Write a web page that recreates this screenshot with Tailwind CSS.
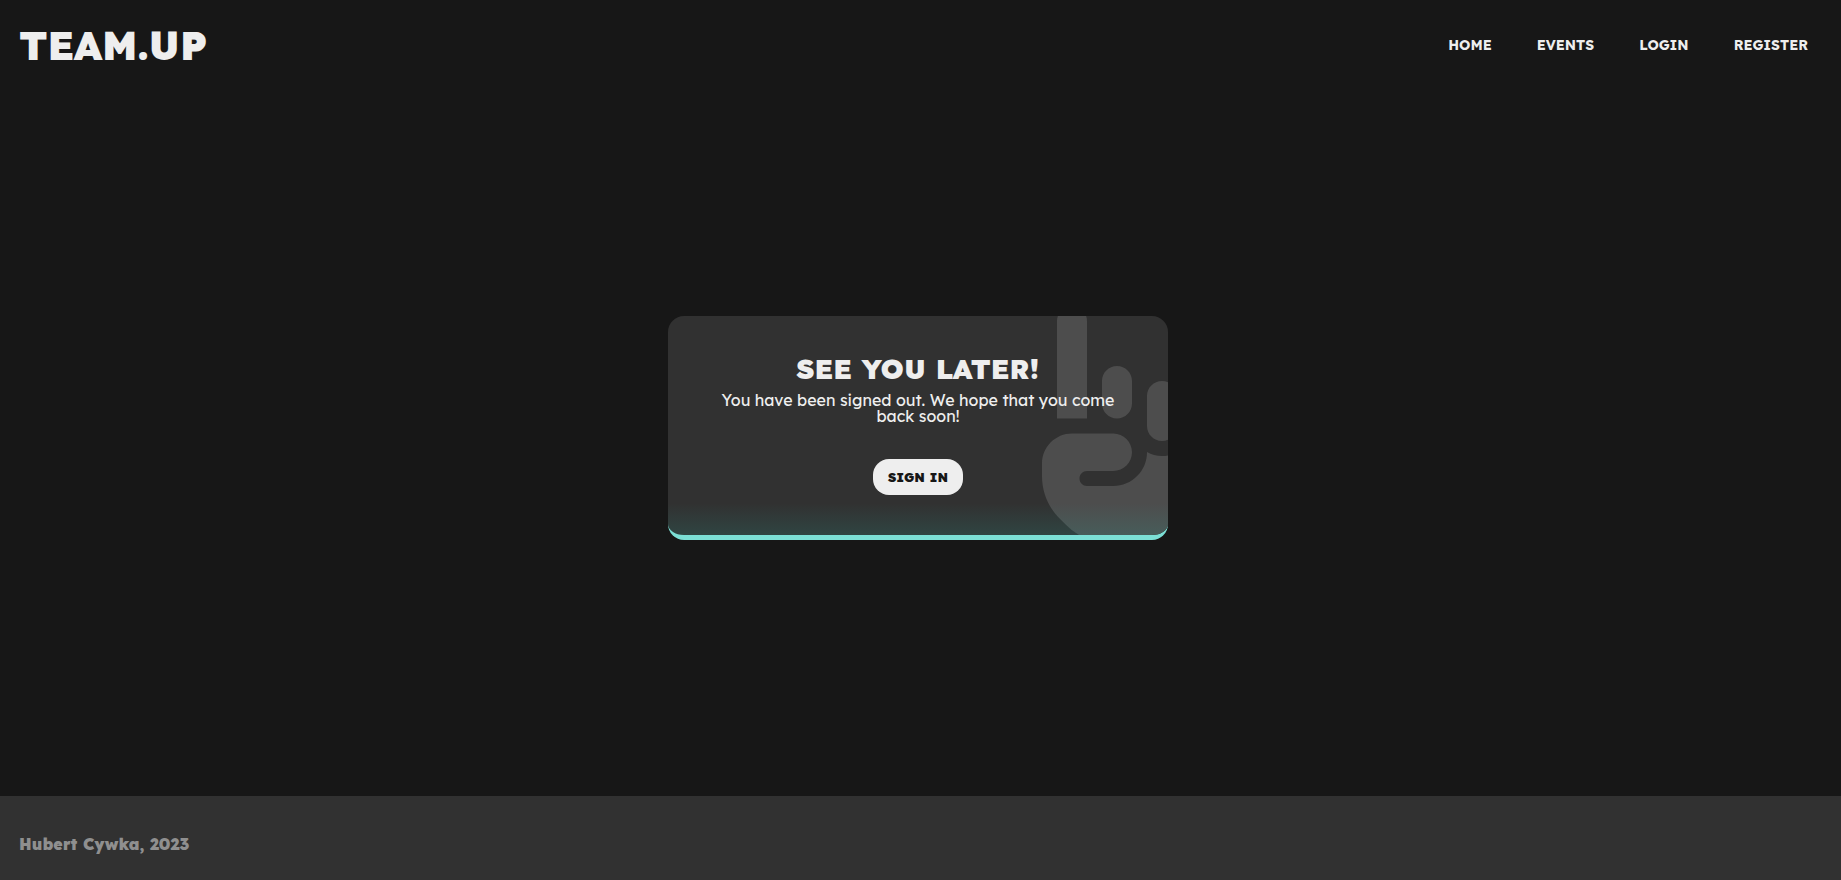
<!DOCTYPE html>
<html lang="en">
<head>
<meta charset="utf-8">
<meta name="viewport" content="width=device-width, initial-scale=1">
<title>Team.up</title>
<script src="https://cdn.jsdelivr.net/npm/@tailwindcss/browser@4"></script>
</head>
<body class="flex min-h-screen flex-col bg-[#171717] font-['Lexend','Inter',sans-serif] text-[#eeeeee]">
  <header class="flex h-[90px] items-center justify-between pl-[19px] pr-[33px]">
    <a href="#" class="text-[40px] leading-10 font-black">TEAM.UP</a>
    <nav class="flex items-center gap-[45px] text-sm font-bold">
      <a href="#">HOME</a>
      <a href="#">EVENTS</a>
      <a href="#">LOGIN</a>
      <a href="#">REGISTER</a>
    </nav>
  </header>

  <main class="flex grow items-center justify-center pr-[5px] pb-[30px]">
    <section class="relative flex w-full max-w-[500px] flex-col items-center overflow-hidden rounded-2xl border-b-[5px] border-[#7ce0d6] bg-[#313131] px-10 pt-[39px] pb-10 text-center">
      <svg class="absolute -top-[10px] -right-[54px] h-[240px] w-[180px] text-[#4d4d4d]" viewBox="0 0 384 512" fill="currentColor" aria-hidden="true"><path d="M32 32C32 14.3 46.3 0 64 0S96 14.3 96 32V240H32V32zM224 192c0-17.7 14.3-32 32-32s32 14.3 32 32v64c0 17.7-14.3 32-32 32s-32-14.3-32-32V192zm-64-64c17.7 0 32 14.3 32 32v48c0 17.7-14.3 32-32 32s-32-14.3-32-32V160c0-17.7 14.3-32 32-32zm160 96c0-17.7 14.3-32 32-32s32 14.3 32 32v64c0 17.7-14.3 32-32 32s-32-14.3-32-32V224zm-96 88l0-.6c9.4 5.4 20.3 8.6 32 8.6c13.2 0 25.4-4 35.6-10.8c8.7 24.9 32.5 42.8 60.4 42.8c11.7 0 22.6-3.1 32-8.6V352c0 88.4-71.6 160-160 160H162.3c-42.4 0-83.1-16.9-113.1-46.9L37.5 453.5C13.5 429.5 0 396.9 0 363V336c0-35.3 28.7-64 64-64h88c22.1 0 40 17.9 40 40s-17.9 40-40 40H96c-8.8 0-16 7.2-16 16s7.2 16 16 16h56c39.8 0 72-32.2 72-72z"/></svg>
      <div class="absolute inset-x-0 bottom-0 h-8 bg-linear-to-t from-[#28b4a5]/15 to-[#28b4a5]/0"></div>
      <h1 class="relative text-[28px] leading-7 font-black">SEE YOU LATER!</h1>
      <p class="relative mt-[9px] text-base leading-4">You have been signed out. We hope that you come back soon!</p>
      <button type="button" class="relative mt-[35px] h-9 rounded-2xl bg-[#eeeeee] px-[15px] pt-px text-[13px] font-black text-[#171717]">SIGN IN</button>
    </section>
  </main>

  <footer class="flex h-[84px] items-center bg-[#313131] px-[19px] pt-3">
    <p class="text-base font-black text-[#8f8f8f]">Hubert Cywka, 2023</p>
  </footer>
</body>
</html>
